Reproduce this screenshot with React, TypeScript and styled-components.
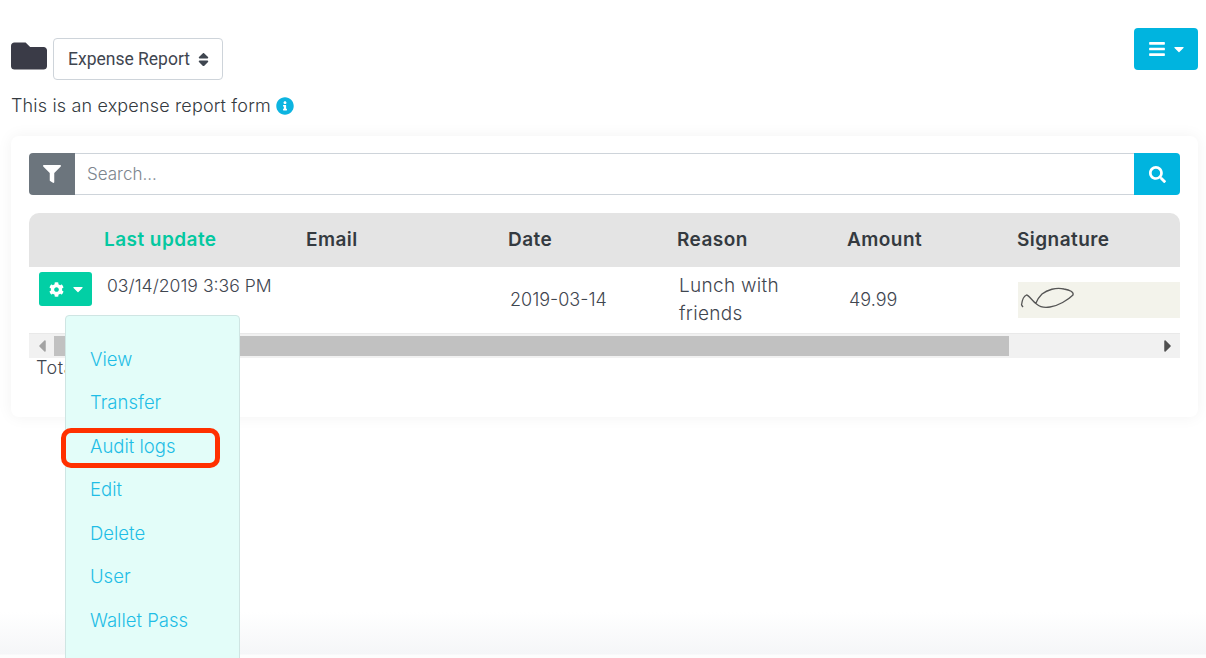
import React from 'react';
import styled, { createGlobalStyle } from 'styled-components';
import {
  FaBars,
  FaCaretDown,
  FaCaretLeft,
  FaCaretRight,
  FaCog,
  FaFilter,
  FaFolder,
  FaInfoCircle,
  FaSearch,
  FaSort,
} from 'react-icons/fa';

const GlobalStyle = createGlobalStyle`
  html, body {
    margin: 0;
    height: 658px;
    overflow: hidden;
    background: #fff;
  }
  * { box-sizing: border-box; }
`;

const FONT = `Inter, "Noto Sans", sans-serif`;

const Page = styled.div`
  position: relative;
  height: 658px;
  overflow: hidden;
  padding: 28px 8px 0 11px;
  font-family: ${FONT};
  background: linear-gradient(to bottom, #fff 0, #fff 612px, #f5f6f8 654px, #fdfdfd 655px);
`;

const TopBar = styled.div`
  display: flex;
  justify-content: space-between;
  align-items: flex-start;
  height: 108px;
`;

const TitleBlock = styled.div`
  display: flex;
  flex-direction: column;
  padding-top: 10px;
`;

const TitleRow = styled.div`
  display: flex;
  align-items: center;
  gap: 6px;
  height: 42px;
`;

const Folder = styled(FaFolder)`
  width: 36px;
  height: 36px;
  margin-bottom: 6px;
  color: #3a3b47;
`;

const FormSelect = styled.div`
  display: flex;
  align-items: center;
  justify-content: space-between;
  width: 170px;
  height: 42px;
  padding: 0 10px 0 14px;
  background: #fff;
  border: 1px solid #ced4da;
  border-radius: 4px;
  font-family: Roboto, sans-serif;
  font-size: 17.5px;
  color: #3f4650;
  svg {
    width: 17px;
    height: 17px;
  }
`;

const Description = styled.div`
  display: flex;
  align-items: center;
  gap: 5px;
  margin-top: 14px;
  font-size: 18px;
  letter-spacing: 0.16px;
  font-weight: 300;
  color: #343a40;
  line-height: 24px;
  svg {
    width: 18px;
    height: 18px;
    color: #0db4e0;
  }
`;

const MenuButton = styled.button`
  display: flex;
  align-items: center;
  justify-content: center;
  gap: 5px;
  width: 64px;
  height: 42px;
  padding: 0 0 0 2px;
  border: none;
  border-radius: 4px;
  background: #00b4df;
  color: #fff;
  svg:first-child { width: 18px; height: 18px; }
  svg:last-child { width: 16px; height: 16px; }
`;

const Card = styled.div`
  height: 281px;
  padding: 17px 18px;
  background: #fff;
  border-radius: 8px;
  box-shadow: 0 0 16px rgba(0, 0, 0, 0.055);
`;

const SearchBar = styled.div`
  display: flex;
  height: 42px;
`;

const FilterAddon = styled.div`
  display: flex;
  align-items: center;
  justify-content: center;
  width: 46px;
  background: #6c757d;
  color: #fff;
  border-radius: 4px 0 0 4px;
  svg { width: 18px; height: 18px; }
`;

const SearchField = styled.div`
  flex: 1;
  display: flex;
  align-items: center;
  padding-left: 12px;
  border: 1px solid #ced4da;
  border-left: none;
  border-right: none;
  font-size: 17px;
  font-weight: 300;
  color: #7c858d;
`;

const SearchButton = styled.div`
  display: flex;
  align-items: center;
  justify-content: center;
  width: 46px;
  background: #00b4df;
  color: #fff;
  border-radius: 0 4px 4px 0;
  svg { width: 17px; height: 17px; }
`;

const TableWrap = styled.div`
  position: relative;
  margin-top: 18px;
`;

const COLUMNS = '65px 202px 202px 169px 170px 170px 173px';

const HeaderRow = styled.div`
  display: grid;
  grid-template-columns: ${COLUMNS};
  align-items: center;
  height: 54px;
  padding-bottom: 2px;
  background: #e4e4e4;
  border-radius: 10px 10px 0 0;
`;

const HeaderCell = styled.div<{ $active?: boolean }>`
  padding-left: 10px;
  font-size: 19px;
  letter-spacing: 0.45px;
  font-weight: 600;
  white-space: nowrap;
  color: ${(p) => (p.$active ? '#04c8a0' : '#343a40')};
`;

const BodyRow = styled.div`
  display: grid;
  grid-template-columns: ${COLUMNS};
  height: 66px;
  font-size: 18px;
  font-weight: 300;
  color: #3f4650;
`;

const ActionCell = styled.div`
  padding: 5px 0 0 10px;
`;

const ActionButton = styled.button`
  display: flex;
  align-items: center;
  justify-content: center;
  gap: 6px;
  width: 53px;
  height: 34px;
  padding: 0 0 0 4px;
  border: none;
  border-radius: 3px;
  background: #02cfa5;
  color: #fff;
  svg:first-child { width: 15px; height: 15px; }
  svg:last-child { width: 16px; height: 16px; }
`;

const TopCell = styled.div`
  padding: 5px 0 0 13px;
  font-size: 17.6px;
  line-height: 28px;
  white-space: nowrap;
`;

const MiddleCell = styled.div`
  display: flex;
  align-items: center;
  padding: 0 0 0 12px;
  line-height: 28px;
`;

const ReasonCell = styled(MiddleCell)`
  padding-right: 40px;
  font-size: 19px;
  letter-spacing: 0.3px;
`;

const SignatureCell = styled.div`
  display: flex;
  align-items: center;
  padding-left: 11px;
  margin-top: -1px;
`;

const Signature = styled.svg`
  display: block;
  width: 162px;
  height: 36px;
  background: #f3f3eb;
`;

const ScrollTrack = styled.div`
  display: flex;
  align-items: center;
  justify-content: space-between;
  height: 25px;
  padding: 2px 0;
  background: #f1f1f1;
  border-top: 1px solid #e9e9e9;
`;

const ScrollArrow = styled.div<{ $muted?: boolean }>`
  display: flex;
  align-items: center;
  justify-content: center;
  width: 25px;
  color: ${(p) => (p.$muted ? '#a3a3a3' : '#505050')};
  svg { width: 20px; height: 20px; }
`;

const ScrollThumb = styled.div`
  width: 955px;
  height: 100%;
  background: #c1c1c1;
`;

const Spacer = styled.div`
  flex: 1;
`;

const Total = styled.div`
  margin-top: -2px;
  padding-left: 7px;
  font-size: 18px;
  letter-spacing: 0.5px;
  font-weight: 300;
  line-height: 24px;
  color: #3f4650;
`;

const DropdownMenu = styled.div`
  position: absolute;
  top: 102px;
  left: 36px;
  width: 175px;
  height: 400px;
  padding: 21.6px 0 0 24px;
  background: #e3fdf9;
  border: 1px solid #cfe5e3;
  border-radius: 4px;
`;

const MenuItem = styled.div`
  position: relative;
  height: 43.5px;
  line-height: 43.5px;
  font-size: 18.5px;
  font-weight: 300;
  color: #1fbde6;
`;

const Highlight = styled.div`
  position: absolute;
  top: 3px;
  left: -29px;
  width: 159px;
  height: 40px;
  border: 5px solid #ff3000;
  border-radius: 10px;
`;

const items = ['View', 'Transfer', 'Audit logs', 'Edit', 'Delete', 'User', 'Wallet Pass'];

export default function App() {
  return (
    <>
      <GlobalStyle />
      <Page>
        <TopBar>
          <TitleBlock>
            <TitleRow>
              <Folder />
              <FormSelect>
                Expense Report
                <FaSort />
              </FormSelect>
            </TitleRow>
            <Description>
              This is an expense report form
              <FaInfoCircle />
            </Description>
          </TitleBlock>
          <MenuButton>
            <FaBars />
            <FaCaretDown />
          </MenuButton>
        </TopBar>
        <Card>
          <SearchBar>
            <FilterAddon>
              <FaFilter />
            </FilterAddon>
            <SearchField>Search...</SearchField>
            <SearchButton>
              <FaSearch />
            </SearchButton>
          </SearchBar>
          <TableWrap>
            <HeaderRow>
              <span />
              <HeaderCell $active>Last update</HeaderCell>
              <HeaderCell>Email</HeaderCell>
              <HeaderCell>Date</HeaderCell>
              <HeaderCell>Reason</HeaderCell>
              <HeaderCell>Amount</HeaderCell>
              <HeaderCell>Signature</HeaderCell>
            </HeaderRow>
            <BodyRow>
              <ActionCell>
                <ActionButton>
                  <FaCog />
                  <FaCaretDown />
                </ActionButton>
              </ActionCell>
              <TopCell>03/14/2019 3:36 PM</TopCell>
              <span />
              <MiddleCell>2019-03-14</MiddleCell>
              <ReasonCell>Lunch with friends</ReasonCell>
              <MiddleCell>49.99</MiddleCell>
              <SignatureCell>
                <Signature viewBox="0 0 162 36">
                  <path
                    d="M3.5 23 C4 19 6 14 8.5 13 C11 13 14 19 18.5 22 C22 25 27 26 32 25 C40 24 50 18 55 13 C56 10 52 8 46 7 C38 5 29 8 24 12 C21 15 19 18 18 21 M3.5 23 L5 25"
                    fill="none"
                    stroke="#555"
                    strokeWidth="1.3"
                  />
                </Signature>
              </SignatureCell>
            </BodyRow>
            <ScrollTrack>
              <ScrollArrow $muted>
                <FaCaretLeft />
              </ScrollArrow>
              <ScrollThumb />
              <Spacer />
              <ScrollArrow>
                <FaCaretRight />
              </ScrollArrow>
            </ScrollTrack>
            <Total>Total</Total>
            <DropdownMenu>
              {items.map((item) => (
                <MenuItem key={item}>
                  {item}
                  {item === 'Audit logs' && <Highlight />}
                </MenuItem>
              ))}
            </DropdownMenu>
          </TableWrap>
        </Card>
      </Page>
    </>
  );
}
